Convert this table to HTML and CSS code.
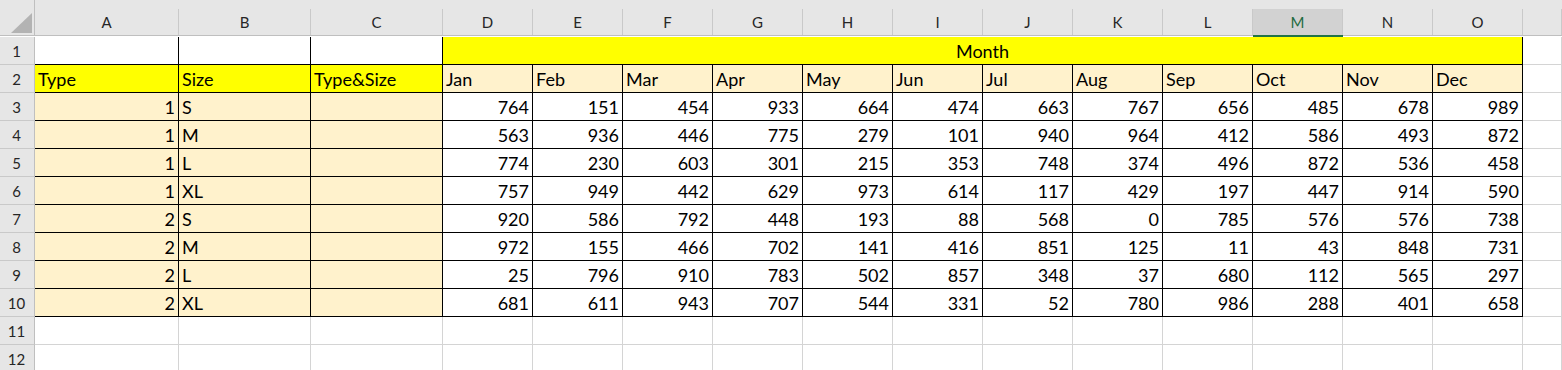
FILE: index.html
```html
<!DOCTYPE html>
<html>
<head>
<meta charset="utf-8">
<link rel="stylesheet" href="styles.css">
</head>
<body>
<div class="sheet">
  <div class="corner"><svg width="35" height="36" viewBox="0 0 35 36"><polygon points="11,33 32,13 32,33" fill="#b3b3b3"/></svg></div>
  <div class="hd"><span>A</span></div>
  <div class="hd"><span>B</span></div>
  <div class="hd"><span>C</span></div>
  <div class="hd"><span>D</span></div>
  <div class="hd"><span>E</span></div>
  <div class="hd"><span>F</span></div>
  <div class="hd"><span>G</span></div>
  <div class="hd"><span>H</span></div>
  <div class="hd"><span>I</span></div>
  <div class="hd"><span>J</span></div>
  <div class="hd"><span>K</span></div>
  <div class="hd"><span>L</span></div>
  <div class="hd sel"><span>M</span></div>
  <div class="hd"><span>N</span></div>
  <div class="hd"><span>O</span></div>
  <div class="hd"><span></span></div>

  <div class="rh">1</div>
  <div class="c k"></div><div class="c k"></div><div class="c k"></div>
  <div class="c k y m span">Month</div>
  <div class="c"></div>

  <div class="rh">2</div>
  <div class="c k y">Type</div><div class="c k y">Size</div><div class="c k y">Type&amp;Size</div>
  <div class="c k o">Jan</div><div class="c k o">Feb</div><div class="c k o">Mar</div><div class="c k o">Apr</div><div class="c k o">May</div><div class="c k o">Jun</div><div class="c k o">Jul</div><div class="c k o">Aug</div><div class="c k o">Sep</div><div class="c k o">Oct</div><div class="c k o">Nov</div><div class="c k o">Dec</div>
  <div class="c"></div>

  <div class="rh">3</div>
  <div class="c k o r">1</div><div class="c k o">S</div><div class="c k o"></div>
  <div class="c k r">764</div><div class="c k r">151</div><div class="c k r">454</div><div class="c k r">933</div><div class="c k r">664</div><div class="c k r">474</div><div class="c k r">663</div><div class="c k r">767</div><div class="c k r">656</div><div class="c k r">485</div><div class="c k r">678</div><div class="c k r">989</div>
  <div class="c"></div>

  <div class="rh">4</div>
  <div class="c k o r">1</div><div class="c k o">M</div><div class="c k o"></div>
  <div class="c k r">563</div><div class="c k r">936</div><div class="c k r">446</div><div class="c k r">775</div><div class="c k r">279</div><div class="c k r">101</div><div class="c k r">940</div><div class="c k r">964</div><div class="c k r">412</div><div class="c k r">586</div><div class="c k r">493</div><div class="c k r">872</div>
  <div class="c"></div>

  <div class="rh">5</div>
  <div class="c k o r">1</div><div class="c k o">L</div><div class="c k o"></div>
  <div class="c k r">774</div><div class="c k r">230</div><div class="c k r">603</div><div class="c k r">301</div><div class="c k r">215</div><div class="c k r">353</div><div class="c k r">748</div><div class="c k r">374</div><div class="c k r">496</div><div class="c k r">872</div><div class="c k r">536</div><div class="c k r">458</div>
  <div class="c"></div>

  <div class="rh">6</div>
  <div class="c k o r">1</div><div class="c k o">XL</div><div class="c k o"></div>
  <div class="c k r">757</div><div class="c k r">949</div><div class="c k r">442</div><div class="c k r">629</div><div class="c k r">973</div><div class="c k r">614</div><div class="c k r">117</div><div class="c k r">429</div><div class="c k r">197</div><div class="c k r">447</div><div class="c k r">914</div><div class="c k r">590</div>
  <div class="c"></div>

  <div class="rh">7</div>
  <div class="c k o r">2</div><div class="c k o">S</div><div class="c k o"></div>
  <div class="c k r">920</div><div class="c k r">586</div><div class="c k r">792</div><div class="c k r">448</div><div class="c k r">193</div><div class="c k r">88</div><div class="c k r">568</div><div class="c k r">0</div><div class="c k r">785</div><div class="c k r">576</div><div class="c k r">576</div><div class="c k r">738</div>
  <div class="c"></div>

  <div class="rh">8</div>
  <div class="c k o r">2</div><div class="c k o">M</div><div class="c k o"></div>
  <div class="c k r">972</div><div class="c k r">155</div><div class="c k r">466</div><div class="c k r">702</div><div class="c k r">141</div><div class="c k r">416</div><div class="c k r">851</div><div class="c k r">125</div><div class="c k r">11</div><div class="c k r">43</div><div class="c k r">848</div><div class="c k r">731</div>
  <div class="c"></div>

  <div class="rh">9</div>
  <div class="c k o r">2</div><div class="c k o">L</div><div class="c k o"></div>
  <div class="c k r">25</div><div class="c k r">796</div><div class="c k r">910</div><div class="c k r">783</div><div class="c k r">502</div><div class="c k r">857</div><div class="c k r">348</div><div class="c k r">37</div><div class="c k r">680</div><div class="c k r">112</div><div class="c k r">565</div><div class="c k r">297</div>
  <div class="c"></div>

  <div class="rh">10</div>
  <div class="c k o r">2</div><div class="c k o">XL</div><div class="c k o"></div>
  <div class="c k r">681</div><div class="c k r">611</div><div class="c k r">943</div><div class="c k r">707</div><div class="c k r">544</div><div class="c k r">331</div><div class="c k r">52</div><div class="c k r">780</div><div class="c k r">986</div><div class="c k r">288</div><div class="c k r">401</div><div class="c k r">658</div>
  <div class="c"></div>

  <div class="rh">11</div>
  <div class="c"></div><div class="c"></div><div class="c"></div><div class="c"></div><div class="c"></div><div class="c"></div><div class="c"></div><div class="c"></div><div class="c"></div><div class="c"></div><div class="c"></div><div class="c"></div><div class="c"></div><div class="c"></div><div class="c"></div><div class="c"></div>

  <div class="rh">12</div>
  <div class="c"></div><div class="c"></div><div class="c"></div><div class="c"></div><div class="c"></div><div class="c"></div><div class="c"></div><div class="c"></div><div class="c"></div><div class="c"></div><div class="c"></div><div class="c"></div><div class="c"></div><div class="c"></div><div class="c"></div><div class="c"></div>
</div>
</body>
</html>
```
FILE: styles.css
```css
html, body {
  margin: 0;
  padding: 0;
  background: #fff;
  overflow: hidden;
}
.sheet {
  display: grid;
  grid-template-columns: 35px 144px 132px 132px repeat(12, 90px) 1fr;
  grid-template-rows: 37px repeat(12, 28px);
  width: 1562px;
  height: 370px;
  overflow: hidden;
  font-family: Lato, "Open Sans", sans-serif;
  color: #000;
}
.corner {
  background: #e6e6e6;
  border-right: 1px solid #bfbfbf;
  border-bottom: 1px solid #bfbfbf;
  box-sizing: border-box;
  height: 36px;
}
.corner svg { display: block; }
.hd {
  background: #e6e6e6;
  padding-top: 9px;
  border-bottom: 1px solid #bfbfbf;
  box-sizing: border-box;
  height: 36px;
  display: flex;
}
.hd span {
  flex: 1;
  display: flex;
  align-items: center;
  justify-content: center;
  border-right: 1px solid #c9c9c9;
  font-size: 15px;
  line-height: 18px;
  color: #262626;
}
.hd.sel {
  border-bottom: 2px solid #217346;
  height: 37px;
}
.hd.sel span {
  background: #d2d2d2;
  color: #1d6b40;
}
.rh {
  background: #e6e6e6;
  border-right: 1px solid #bfbfbf;
  border-bottom: 1px solid #c9c9c9;
  display: flex;
  align-items: flex-end;
  justify-content: center;
  font-size: 15px;
  line-height: 18px;
  padding-bottom: 4px;
  padding-right: 1px;
  color: #262626;
}
.c {
  border-right: 1px solid #d4d4d4;
  border-bottom: 1px solid #d4d4d4;
  display: flex;
  align-items: flex-end;
  padding: 0 3px 3px 3px;
  font-size: 18px;
  line-height: 20px;
  white-space: nowrap;
  overflow: hidden;
  min-width: 0;
}
.k { border-color: #000; }
.y { background: #ffff00; }
.o { background: #fff2cc; }
.r { justify-content: flex-end; }
.m { justify-content: center; }
.span { grid-column: span 12; }
```
